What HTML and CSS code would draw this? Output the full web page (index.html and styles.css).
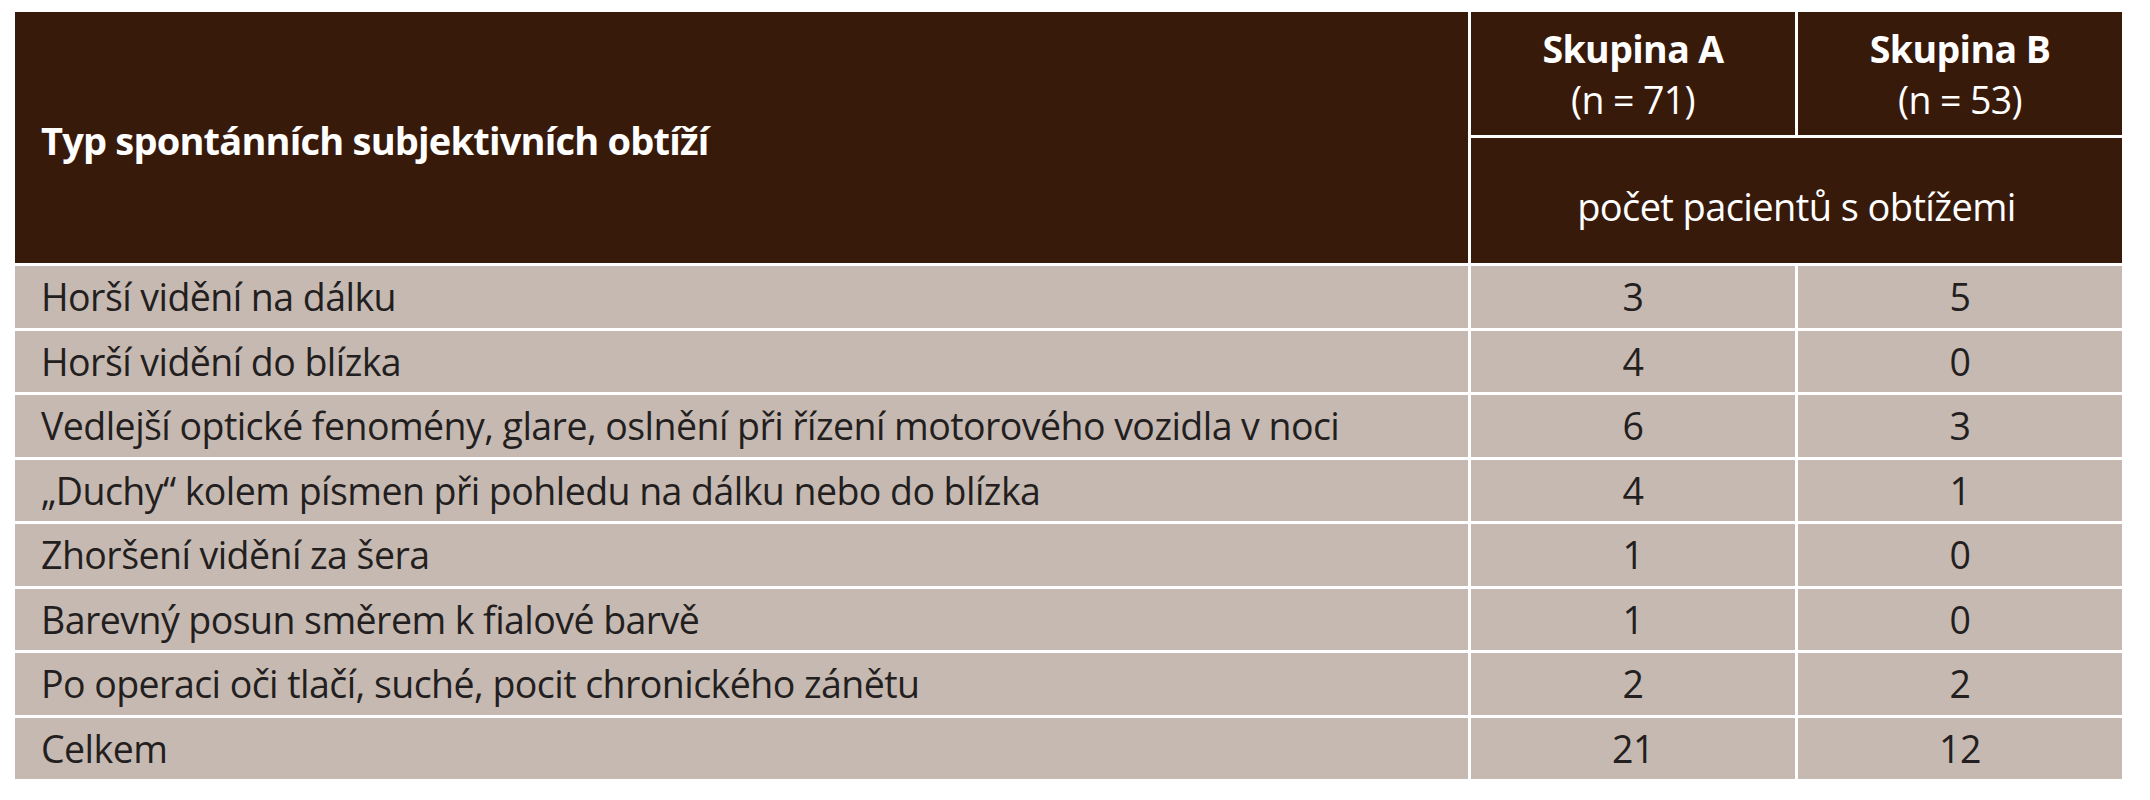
FILE: index.html
```html
<!DOCTYPE html>
<html lang="cs">
<head>
<meta charset="utf-8">
<title>Tabulka obtíží</title>
<link rel="stylesheet" href="styles.css">
</head>
<body>
<table class="tbl">
  <colgroup>
    <col class="c-label">
    <col class="c-num">
    <col class="c-num">
  </colgroup>
  <thead>
    <tr class="h1">
      <th rowspan="2" class="label">Typ spontánních subjektivních obtíží</th>
      <th class="grp"><span class="grp-name">Skupina A</span><span class="grp-n">(n = 71)</span></th>
      <th class="grp"><span class="grp-name">Skupina B</span><span class="grp-n">(n = 53)</span></th>
    </tr>
    <tr class="h2">
      <th colspan="2" class="sub">počet pacientů s obtížemi</th>
    </tr>
  </thead>
  <tbody>
    <tr><td>Horší vidění na dálku</td><td class="num">3</td><td class="num">5</td></tr>
    <tr><td>Horší vidění do blízka</td><td class="num">4</td><td class="num">0</td></tr>
    <tr><td>Vedlejší optické fenomény, glare, oslnění při řízení motorového vozidla v noci</td><td class="num">6</td><td class="num">3</td></tr>
    <tr><td>„Duchy“ kolem písmen při pohledu na dálku nebo do blízka</td><td class="num">4</td><td class="num">1</td></tr>
    <tr><td>Zhoršení vidění za šera</td><td class="num">1</td><td class="num">0</td></tr>
    <tr><td>Barevný posun směrem k fialové barvě</td><td class="num">1</td><td class="num">0</td></tr>
    <tr><td>Po operaci oči tlačí, suché, pocit chronického zánětu</td><td class="num">2</td><td class="num">2</td></tr>
    <tr><td>Celkem</td><td class="num">21</td><td class="num">12</td></tr>
  </tbody>
</table>
</body>
</html>
```
FILE: styles.css
```css
html, body {
  margin: 0;
  padding: 0;
  background: #ffffff;
}

body {
  padding: 9px 0 0 12px;
  font-family: "Open Sans", "Noto Sans", "Liberation Sans", sans-serif;
}

.tbl {
  border-collapse: separate;
  border-spacing: 3px;
  table-layout: fixed;
  width: 2113px;
  background: #ffffff;
}

.c-label { width: 1453px; }
.c-num { width: 324px; }

.tbl th {
  background: #381a0b;
  color: #ffffff;
  font-weight: 400;
  padding: 0;
}

.tbl .h1 { height: 123px; }
.tbl .h2 { height: 125px; }

.tbl th.label {
  text-align: left;
  padding: 4px 0 0 26px;
  font-weight: 700;
  font-size: 38px;
  letter-spacing: -0.8px;
}

.tbl th.grp {
  text-align: center;
  font-size: 37.5px;
  line-height: 51px;
  letter-spacing: -0.6px;
}

.grp-name {
  display: block;
  font-weight: 700;
}

.grp-n {
  display: block;
  font-weight: 400;
}

.tbl th.sub {
  text-align: center;
  font-size: 38px;
  letter-spacing: -0.6px;
  padding-top: 10px;
}

.tbl tbody tr { height: 61.5px; }

.tbl td {
  background: #c6b9b2;
  color: #231f20;
  font-size: 37.5px;
  letter-spacing: -0.55px;
  padding: 0 0 0 26px;
  vertical-align: middle;
  white-space: nowrap;
}

.tbl td.num {
  text-align: center;
  padding: 0;
}
```
